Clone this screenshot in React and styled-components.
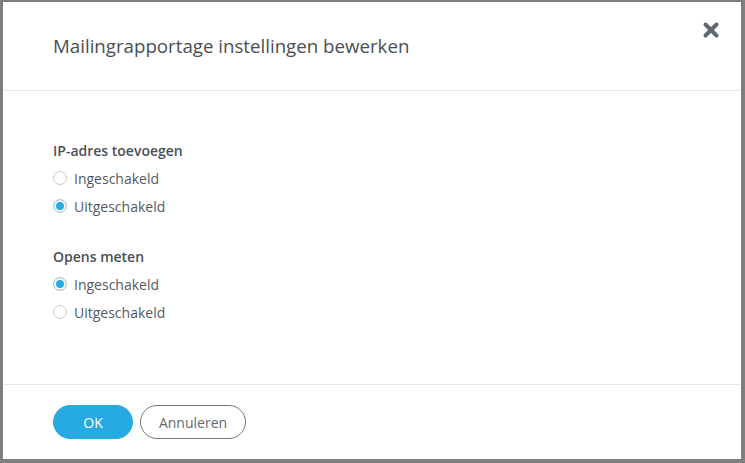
import React, { useState } from "react";
import styled, { createGlobalStyle } from "styled-components";

const GlobalStyle = createGlobalStyle`
  html, body {
    margin: 0;
    padding: 0;
    background: #7f7f7f;
    font-family: "Open Sans", "Liberation Sans", sans-serif;
  }
`;

const Backdrop = styled.div`
  width: 745px;
  height: 463px;
  box-sizing: border-box;
  padding: 2px 4px 4px 3px;
  background: #7f7f7f;
`;

const Dialog = styled.div`
  height: 100%;
  background: #fff;
  display: flex;
  flex-direction: column;
`;

const Header = styled.div`
  position: relative;
  height: 89px;
  box-sizing: border-box;
  padding: 30px 50px 0;
  border-bottom: 1px solid #e6e8ea;
`;

const Title = styled.h4`
  margin: 0;
  font-size: 18.7px;
  font-weight: 400;
  line-height: 28px;
  color: #4a4f56;
`;

const Close = styled.button`
  position: absolute;
  top: 18px;
  right: 20px;
  width: 20px;
  height: 20px;
  padding: 0;
  border: 0;
  background: none;
  cursor: pointer;
`;

const Body = styled.div`
  flex: 1;
  padding: 49px 50px 0;
`;

const Group = styled.div`
  margin-bottom: 26px;
`;

const Label = styled.div`
  font-size: 14px;
  font-weight: 600;
  line-height: 22px;
  color: #4a4f56;
  margin-bottom: 2px;
`;

const Option = styled.label`
  display: flex;
  align-items: center;
  height: 28px;
  font-size: 14px;
  color: #555a62;
  cursor: pointer;
`;

const Circle = styled.span`
  width: 14px;
  height: 14px;
  box-sizing: border-box;
  border-radius: 50%;
  border: 1px solid #c8cbce;
  background: ${(p) => (p.checked ? "#27aae1" : "#fff")};
  box-shadow: ${(p) => (p.checked ? "inset 0 0 0 2px #fff" : "none")};
  margin: 0 7px 0 0;
`;

const Footer = styled.div`
  height: 75px;
  box-sizing: border-box;
  border-top: 1px solid #e6e8ea;
  display: flex;
  align-items: flex-start;
  gap: 7px;
  padding: 20px 50px 0;
`;

const Button = styled.button`
  height: 34px;
  border-radius: 17px;
  font-family: inherit;
  font-size: 14px;
  cursor: pointer;
  padding: 0;
  width: ${(p) => (p.primary ? "80px" : "106px")};
  background: ${(p) => (p.primary ? "#27aae1" : "#fff")};
  color: ${(p) => (p.primary ? "#fff" : "#636870")};
  border: ${(p) => (p.primary ? "1px solid #27aae1" : "1px solid #737880")};
`;

function RadioGroup({ label, options, initial }) {
  const [value, setValue] = useState(initial);
  return (
    <Group>
      <Label>{label}</Label>
      {options.map((o) => (
        <Option key={o} onClick={() => setValue(o)}>
          <Circle checked={value === o} />
          {o}
        </Option>
      ))}
    </Group>
  );
}

export default function App() {
  return (
    <Backdrop>
      <GlobalStyle />
      <Dialog>
        <Header>
          <Title>Mailingrapportage instellingen bewerken</Title>
          <Close aria-label="Sluiten">
            <svg width="20" height="20" viewBox="0 0 20 20">
              <path
                d="M4.5 4.5 L15.5 15.5 M15.5 4.5 L4.5 15.5"
                stroke="#5d6873"
                strokeWidth="4"
                strokeLinecap="round"
              />
            </svg>
          </Close>
        </Header>
        <Body>
          <RadioGroup
            label="IP-adres toevoegen"
            options={["Ingeschakeld", "Uitgeschakeld"]}
            initial="Uitgeschakeld"
          />
          <RadioGroup
            label="Opens meten"
            options={["Ingeschakeld", "Uitgeschakeld"]}
            initial="Ingeschakeld"
          />
        </Body>
        <Footer>
          <Button primary>OK</Button>
          <Button>Annuleren</Button>
        </Footer>
      </Dialog>
    </Backdrop>
  );
}
